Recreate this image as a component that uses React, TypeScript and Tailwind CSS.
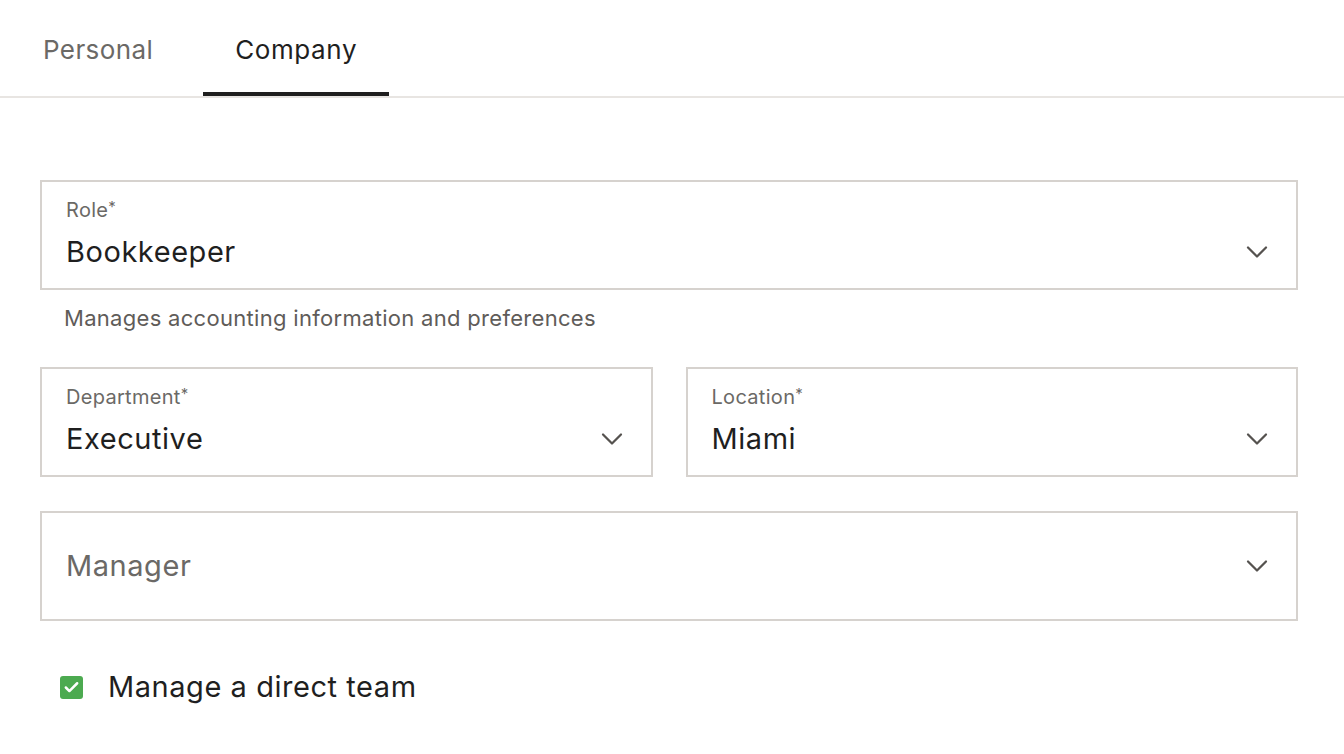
import { ChevronDown, Check } from 'lucide-react'

const font = { fontFamily: 'Inter, "Noto Sans", sans-serif' }

function Chevron() {
	return <ChevronDown className="h-9 w-9 shrink-0 text-[#55524f]" strokeWidth={1.5} />
}

function SelectField({ label, value }: { label: string; value: string }) {
	return (
		<div className="h-[110px] border-2 border-[#d6d2ce] bg-white pt-[16px] pr-[21px] pl-[24px]">
			<div className="text-[20px] leading-[24px] tracking-[0.3px] text-[#6b6966]">
				{label}
				<span className="align-[5px] text-[15px] leading-none">*</span>
			</div>
			<div className="mt-[12px] flex h-[36px] items-center justify-between">
				<span className="text-[29px] leading-[36px] tracking-[0.55px] text-[#1f1f1f]">{value}</span>
				<Chevron />
			</div>
		</div>
	)
}

export default function App() {
	return (
		<div className="min-h-screen bg-white" style={font}>
			{/* Tabs */}
			<div className="flex items-end gap-[18px] border-b-2 border-[#e8e5e2] pl-[11px]">
				<button className="px-8 pt-[32px] pb-[28px] text-[26px] leading-[36px] tracking-[0.4px] text-[#6b6966]">
					Personal
				</button>
				<button className="border-b-4 border-[#1f1f1f] px-8 pt-[32px] pb-[24px] text-[26px] leading-[36px] tracking-[0.6px] text-[#1f1f1f]">
					Company
				</button>
			</div>

			{/* Form */}
			<div className="flex flex-col pt-[82px] pr-[46px] pl-[40px]">
				<SelectField label="Role" value="Bookkeeper" />
				<p className="mt-[15px] pl-[24px] text-[22px] leading-[26px] tracking-[0.3px] text-[#5f5c59]">
					Manages accounting information and preferences
				</p>

				<div className="mt-[36px] grid grid-cols-2 gap-[33px]">
					<SelectField label="Department" value="Executive" />
					<SelectField label="Location" value="Miami" />
				</div>

				<div className="mt-[34px] flex h-[110px] items-center justify-between border-2 border-[#d6d2ce] pr-[21px] pl-[24px]">
					<span className="text-[29px] leading-[36px] tracking-[0.55px] text-[#6b6966]">Manager</span>
					<Chevron />
				</div>

				<label className="mt-[48px] flex h-[36px] items-center gap-[25px] pl-[20px]">
					<span className="flex h-[23px] w-[23px] items-center justify-center rounded-[3px] bg-[#4caa50]">
						<Check className="h-[17px] w-[17px] text-white" strokeWidth={3.5} />
					</span>
					<span className="text-[29px] leading-[36px] tracking-[0.55px] text-[#1f1f1f]">
						Manage a direct team
					</span>
				</label>
			</div>
		</div>
	)
}
